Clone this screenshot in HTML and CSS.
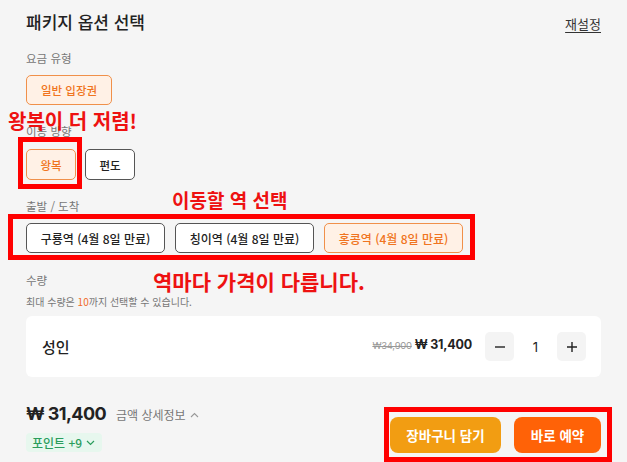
FILE: index.html
```html
<!DOCTYPE html>
<html lang="ko">
<head>
<meta charset="utf-8">
<title>패키지 옵션 선택</title>
<link rel="stylesheet" href="styles.css">
</head>
<body>
<div class="page">
  <header class="head">
    <h1 class="title">패키지 옵션 선택</h1>
    <a class="reset" href="#">재설정</a>
  </header>

  <section class="group g1">
    <div class="label">요금 유형</div>
    <div class="opts"><button class="opt sel w-ticket">일반 입장권</button></div>
  </section>

  <section class="group g2">
    <div class="label">이동 방향</div>
    <div class="opts">
      <button class="opt sel w-dir">왕복</button>
      <button class="opt w-dir">편도</button>
    </div>
  </section>

  <section class="group g3">
    <div class="label">출발 / 도착</div>
    <div class="opts">
      <button class="opt w-st">구룡역 (4월 8일 만료)</button>
      <button class="opt w-st">칭이역 (4월 8일 만료)</button>
      <button class="opt sel w-st">홍콩역 (4월 8일 만료)</button>
    </div>
  </section>

  <section class="qty">
    <div class="label">수량</div>
    <div class="note">최대 수량은 <span class="hl">10</span>까지 선택할 수 있습니다.</div>
    <div class="card">
      <span class="who">성인</span>
      <div class="price"><s class="old">₩34,900</s><b class="now">₩ 31,400</b></div>
      <div class="stepper">
        <button class="step"><svg width="12" height="12" viewBox="0 0 12 12"><path d="M1 6h10" stroke="#222" stroke-width="1.4"/></svg></button>
        <span class="count">1</span>
        <button class="step"><svg width="12" height="12" viewBox="0 0 12 12"><path d="M1 6h10M6 1v10" stroke="#222" stroke-width="1.4"/></svg></button>
      </div>
    </div>
  </section>

  <footer class="foot">
    <div class="total">
      <div class="sum-row">
        <span class="sum">₩ 31,400</span>
        <span class="detail">금액 상세정보 <svg width="9" height="6" viewBox="0 0 9 6"><path d="M1 5l3.5-3.5L8 5" fill="none" stroke="#999" stroke-width="1.1"/></svg></span>
      </div>
      <span class="point">포인트 +9 <svg width="9" height="6" viewBox="0 0 9 6"><path d="M1 1l3.5 3.5L8 1" fill="none" stroke="#2a9d5c" stroke-width="1.2"/></svg></span>
    </div>
    <div class="actions">
      <button class="btn cart">장바구니 담기</button>
      <button class="btn book">바로 예약</button>
    </div>
  </footer>

  <div class="mark box1"></div>
  <div class="mark box2"></div>
  <div class="mark box3"></div>
  <div class="note-red n1">왕복이 더 저렴!</div>
  <div class="note-red n2">이동할 역 선택</div>
  <div class="note-red n3">역마다 가격이 다릅니다.</div>
</div>
</body>
</html>
```
FILE: styles.css
```css
* { box-sizing: border-box; }
html, body { margin: 0; padding: 0; }
body {
  background: #f5f5f5;
  font-family: "Noto Sans CJK KR", "Noto Sans", sans-serif;
  color: #222;
  width: 627px;
  height: 462px;
  overflow: hidden;
}
.page {
  position: relative;
  padding: 10px 26px 0;
  height: 462px;
}
.head {
  display: flex;
  justify-content: space-between;
  align-items: center;
  height: 24px;
}
.title {
  margin: 0;
  font-size: 17px;
  font-weight: 500;
  line-height: 24px;
  color: #222;
}
.reset {
  font-size: 13px;
  color: #333;
  text-decoration: underline;
  text-underline-offset: 3px;
  margin-top: 2px;
}
.label {
  font-size: 11.5px;
  line-height: 18px;
  color: #777;
}
.group.g1 { margin-top: 15px; }
.group.g2 { margin-top: 17px; }
.group.g3 { margin-top: 17px; }
.g1 .label, .g3 .label { margin-bottom: 8px; }
.g2 .label { margin-bottom: 9px; }
.opts { display: flex; gap: 10px; }
.g2 .opts { gap: 9px; }
.opt {
  height: 30px;
  border: 1px solid #555;
  border-radius: 5px;
  background: #fff;
  font-family: "Noto Sans CJK KR", sans-serif;
  font-size: 11.5px;
  font-weight: 500;
  color: #222;
  padding: 0;
}
.opt.sel {
  border-color: #f0904a;
  background: #fff1e6;
  color: #f07420;
}
.w-ticket { width: 86px; }
.w-dir { width: 50px; height: 31px; }
.w-st { width: 139px; font-size: 12px; }

.qty { margin-top: 18px; }
.note {
  margin-top: 5px;
  font-size: 10px;
  line-height: 16px;
  color: #777;
}
.hl { color: #f06a2a; }
.card {
  margin-top: 6px;
  height: 61px;
  background: #fff;
  border-radius: 6px;
  display: flex;
  align-items: center;
  padding: 0 15px 0 16px;
}
.who { font-size: 15px; font-weight: 500; flex: 1; }
.price { display: flex; align-items: baseline; gap: 3px; margin-right: 13px; margin-top: -4px; }
.old {
  font-family: Inter, "Noto Sans CJK KR", sans-serif;
  font-size: 9.5px;
  color: #999;
  letter-spacing: -0.3px;
}
.now {
  font-family: Inter, "Noto Sans CJK KR", sans-serif;
  font-size: 12.5px;
  font-weight: 700;
  color: #222;
  letter-spacing: -0.2px;
}
.stepper { display: flex; align-items: center; }
.step {
  width: 29px;
  height: 29px;
  border: none;
  border-radius: 5px;
  background: #f4f4f4;
  display: flex;
  align-items: center;
  justify-content: center;
  padding: 0;
}
.count {
  width: 43px;
  text-align: center;
  font-family: Inter, sans-serif;
  font-size: 13px;
  color: #222;
}

.foot {
  margin-top: 23px;
  display: flex;
  justify-content: space-between;
  align-items: flex-end;
}
.sum-row { display: flex; align-items: center; gap: 10px; height: 26px; }
.sum {
  font-family: Inter, "Noto Sans CJK KR", sans-serif;
  font-size: 18px;
  font-weight: 700;
  color: #222;
  letter-spacing: -0.6px;
}
.detail {
  font-size: 12px;
  color: #777;
  display: flex;
  align-items: center;
  gap: 4px;
  margin-top: 3px;
}
.point {
  margin-top: 7px;
  display: inline-flex;
  align-items: center;
  gap: 4px;
  height: 19px;
  padding: 0 7px 0 6px;
  border-radius: 4px;
  background: #e7f7ee;
  color: #2a9d5c;
  font-size: 12px;
  font-weight: 500;
}
.total { display: flex; flex-direction: column; align-items: flex-start; }
.actions { display: flex; gap: 13px; margin-bottom: -1px; }
.btn {
  height: 36px;
  border: none;
  border-radius: 8px;
  color: #fff;
  font-family: "Noto Sans CJK KR", sans-serif;
  font-size: 13.5px;
  font-weight: 700;
  padding: 0;
}
.cart { width: 111px; background: #f29d12; }
.book { width: 87px; background: #ff6207; }

/* annotation overlays */
.mark {
  position: absolute;
  border: 5px solid #ff0000;
}
.box1 { left: 18px; top: 137px; width: 64px; height: 52px; }
.box2 { left: 8px; top: 214px; width: 467px; height: 46px; }
.box3 { left: 384px; top: 407px; width: 228px; height: 55px; }
.note-red {
  position: absolute;
  color: #ee1111;
  font-weight: 700;
  white-space: nowrap;
  line-height: 1;
}
.n1 { left: 8px; top: 111px; font-size: 20px; }
.n2 { left: 172px; top: 190px; font-size: 19px; }
.n3 { left: 153px; top: 271px; font-size: 21px; }
```
